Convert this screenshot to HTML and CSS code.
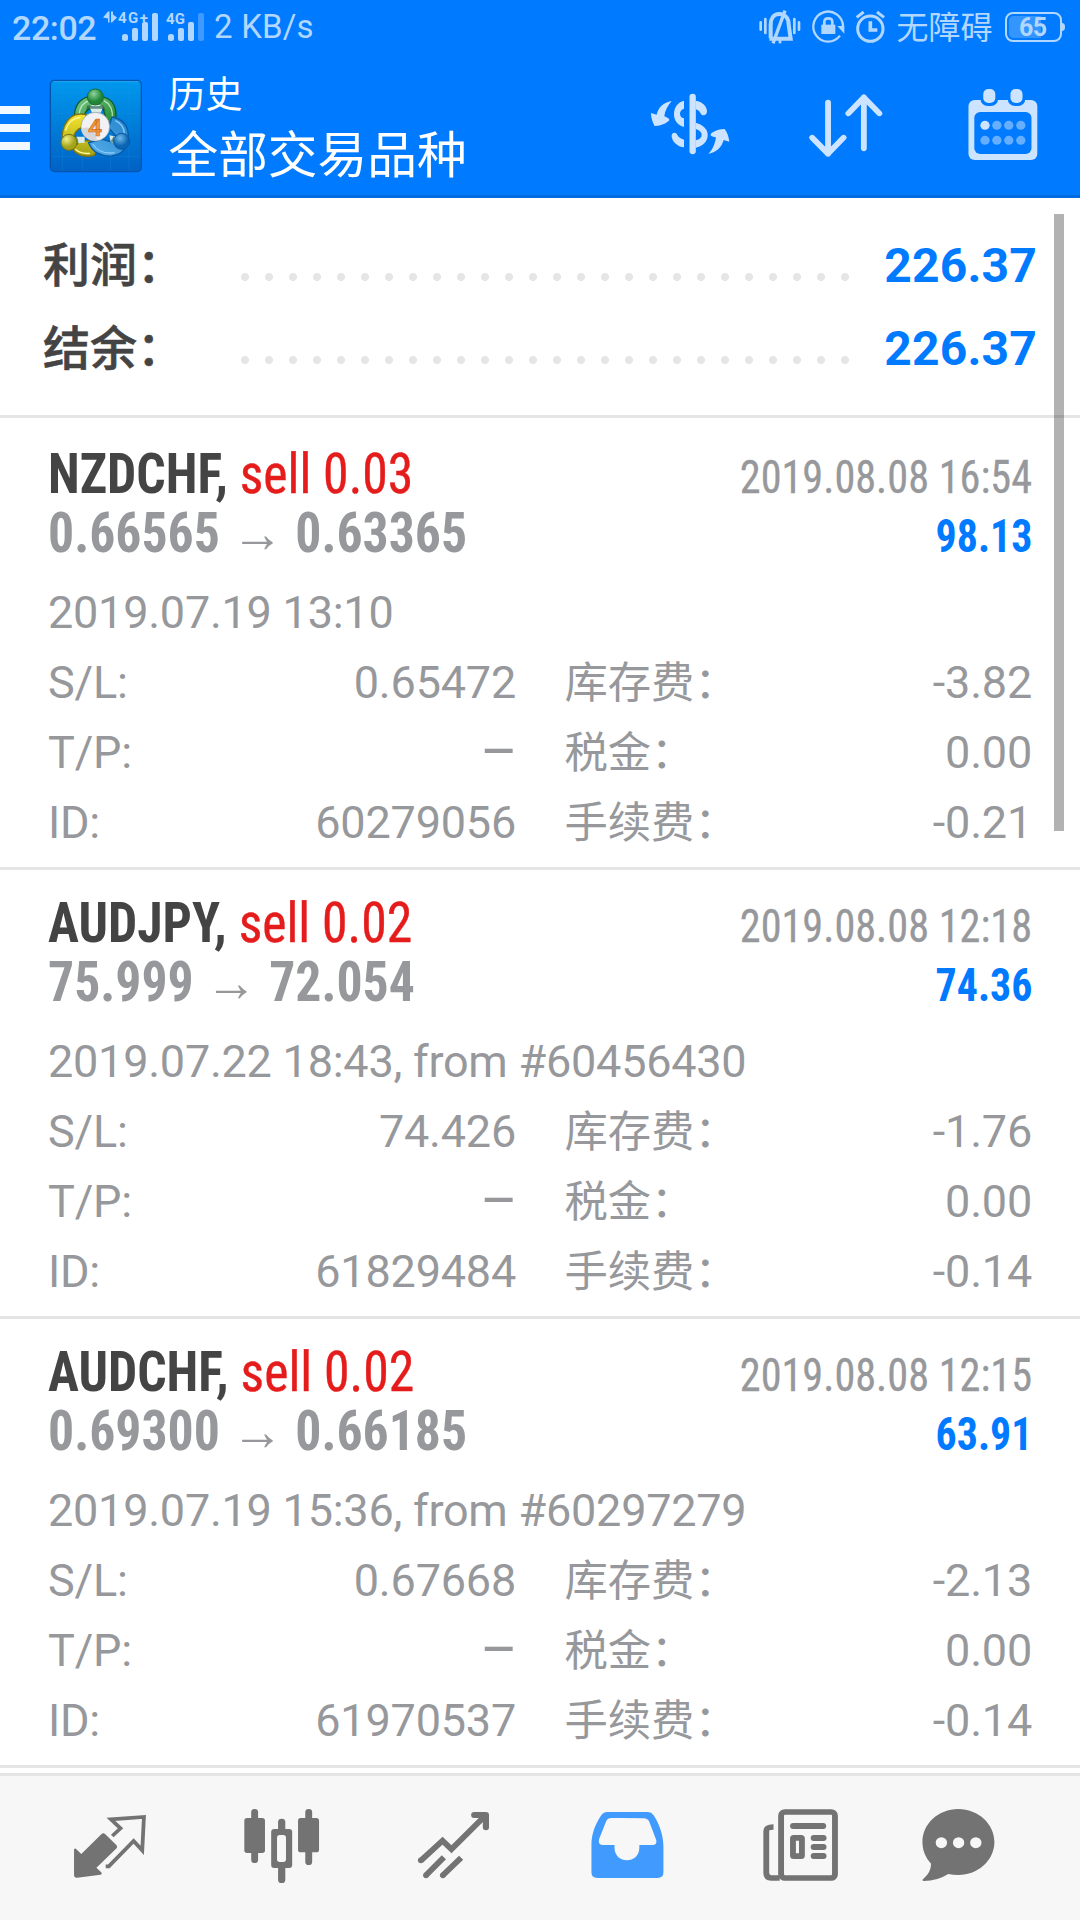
FILE: index.html
```html
<!DOCTYPE html>
<html lang="zh-CN">
<head>
<meta charset="utf-8">
<title>历史</title>
<link rel="stylesheet" href="styles.css">
</head>
<body>
<header class="header">
  <div class="status">
    <span class="clock">22:02</span>
    <svg class="signal" viewBox="100 0 107 56" fill="#b2d7ff">
      <path d="M103 17.500l5-6h1.500v11h-1.500v-4zM111 11.500h2v3l4 3-5 5h-1z"/>
      <text x="118" y="23" class="net" textLength="30">4G+</text>
      <rect x="122" y="34" width="6" height="7" rx="2.5"/><rect x="132" y="28" width="6" height="13" rx="2"/><rect x="142" y="22" width="6" height="19" rx="2"/><rect x="152" y="13" width="6" height="28" rx="2"/>
      <text x="166" y="24" class="net" textLength="19">4G</text>
      <rect x="168" y="34" width="6" height="7" rx="2.5"/><rect x="178" y="28" width="6" height="13" rx="2"/><rect x="188" y="22" width="6" height="19" rx="2"/><rect x="198" y="13" width="6" height="28" rx="2" opacity=".35"/>
    </svg>
    <span class="speed">2 KB/s</span>
    <svg class="sysicons" viewBox="20 0 390 168" fill="none" stroke="#b2d7ff">
      <g stroke-width="8" stroke-linecap="round"><path d="M31 67v22M45 57v42M132 57v42M146 67v22"/></g>
      <path d="M61 114V74c0-18 8-32 26-32s28 14 28 32l6 42H57" stroke-width="12"/>
      <path d="M68 130L104 32" stroke-width="10"/><path d="M89 114v16" stroke-width="8"/>
      <path d="M278 79A44.500 45 0 1 0 269 107" stroke-width="7"/>
      <path d="M261 78h21v23z" fill="#b2d7ff" stroke="none"/>
      <rect x="213" y="74" width="42" height="28" fill="#b2d7ff" stroke="none"/><path d="M222 75V66q0-11 12-11t12 11v9" stroke-width="8"/>
      <circle cx="360" cy="86" r="38" stroke-width="9"/><path d="M360 64v26h21" stroke-width="11"/><path d="M319 52l21-16M401 52l-21-16" stroke-width="9"/>
    </svg>
    <span class="mode">无障碍</span>
    <svg class="battery" viewBox="1003 0 64 56">
      <rect x="1006" y="13" width="55" height="28" rx="7" fill="none" stroke="#b2d7ff" stroke-width="2"/>
      <path d="M1014 16h27v22h-27q-5 0-5-5V21q0-5 5-5z" fill="#3595ff"/>
      <path d="M1062 23q3 0 3 4t-3 4z" fill="#b2d7ff"/>
      <text x="1019" y="36" class="level" textLength="28" fill="#b2d7ff">65</text>
    </svg>
  </div>
  <div class="appbar">
    <div class="menu"><i></i><i></i><i></i></div>
    <svg class="logo" viewBox="15 15 282 282">
      <defs>
        <linearGradient id="tile" x1="0" y1="0" x2="0" y2="1"><stop offset="0" stop-color="#0098ee"/><stop offset="1" stop-color="#0062c4"/></linearGradient>
        <linearGradient id="green" x1="0" y1="0" x2="1" y2="1"><stop offset="0" stop-color="#7fc98b"/><stop offset="1" stop-color="#178128"/></linearGradient>
        <linearGradient id="yellow" x1="0" y1="0" x2="0" y2="1"><stop offset="0" stop-color="#f5e52e"/><stop offset="1" stop-color="#a3a016"/></linearGradient>
        <linearGradient id="blue" x1="1" y1="0" x2="0" y2="1"><stop offset="0" stop-color="#2584cc"/><stop offset="1" stop-color="#55aeea"/></linearGradient>
        <radialGradient id="gh" cx=".4" cy=".3"><stop offset="0" stop-color="#8fd39b"/><stop offset="1" stop-color="#1f8737"/></radialGradient>
        <radialGradient id="yh" cx=".35" cy=".3"><stop offset="0" stop-color="#f2f08c"/><stop offset="1" stop-color="#a4a31a"/></radialGradient>
        <radialGradient id="bh" cx=".4" cy=".3"><stop offset="0" stop-color="#6dbbe9"/><stop offset="1" stop-color="#0c64b4"/></radialGradient>
      </defs>
      <rect x="19" y="19" width="273" height="274" rx="13" fill="url(#tile)" stroke="#0454ad" stroke-width="4"/>
      <path d="M28 23H283" stroke="#35adf3" stroke-width="2"/>
      <path d="M55 24v264M115 24v264M200 24v264M255 24v264M24 55h264M24 118h264M24 248h264" stroke="#24a0ec" stroke-width="2" opacity=".3"/>
      <path d="M140 68C112 70 92 90 91 128q6 18 28 10c0-16 4-24 14-32l42-4c8 14 12 28 12 60 18-4 29-20 29-38 0-34-18-54-48-56z" fill="url(#green)" stroke="#0b5a24" stroke-width="4"/>
      <path d="M140 78c-22 6-33 20-35 44M180 80c20 10 27 30 25 54" fill="none" stroke="#b4e6b5" stroke-width="4"/>
      <path d="M127 122c-36-8-68 10-73 66l34 4c2-14 10-26 26-32zM82 216c10 26 36 36 68 28l14-22-30-22-26 2z" fill="url(#yellow)" stroke="#7f7310" stroke-width="4"/>
      <path d="M109 130c-24 2-38 18-44 40M94 226c10 9 26 14 44 12" fill="none" stroke="#fff59a" stroke-width="4"/>
      <path d="M204 129c36 6 52 32 48 62l-34-2-24-28zM134 206c10 28 38 42 70 40 20-4 30-10 36-20l-24-18-40-12z" fill="url(#blue)" stroke="#075aa5" stroke-width="4"/>
      <path d="M214 140c18 8 26 20 27 38M146 210c14 22 38 30 66 26" fill="none" stroke="#8acbfa" stroke-width="4"/>
      <path d="M136 98l18-10 24 10-8 18h-26zM96 188l26 0v18l-26 2zM196 184l22 4-4 22-14-6z" fill="#d8ebe6"/>
      <path d="M130 94q26 6 48 0l8 18-14-8h-36l-10 8zM92 184q14 10 10 28l-10 2zM212 182q-4 16 2 28l-14-8z" fill="#134f3c" opacity=".6"/>
      <circle cx="154" cy="69" r="24" fill="url(#gh)" stroke="#176c31" stroke-width="3"/>
      <circle cx="75" cy="205" r="24" fill="url(#yh)" stroke="#767312" stroke-width="3"/>
      <circle cx="233" cy="202" r="24" fill="url(#bh)" stroke="#0757a5" stroke-width="3"/>
      <circle cx="154" cy="158" r="43" fill="#f2f2f5" stroke="#8d98a0" stroke-width="2"/>
      <path d="M112 164q35-16 48 36A42 42 0 0 1 112 164z" fill="#d5d6da"/>
      <text x="153" y="185" class="four">4</text>
    </svg>
    <div class="titles"><div class="screen">历史</div><div class="filter">全部交易品种</div></div>
    <svg class="act-deposit" viewBox="0 0 300 240" fill="none" stroke="#cce4ff">
      <path d="M158 39V201" stroke-width="19" stroke-linecap="round"/>
      <path d="M132 50C113 55 102 70 102 90s12 35 30 39v-26c-8-2-12-7-12-14s4-13 12-15zM167 50c20 3 34 16 34 32 0 12-14 17-20 5-3-6-8-9-14-11zM167 116c24 7 36 20 36 37 0 20-14 34-36 38v-22c12-3 18-8 18-16s-6-14-18-18zM132 190C112 187 98 175 95 158c-2-13 13-16 17-5 3 7 10 11 20 14z" fill="#cce4ff" stroke="none"/>
      <path d="M95 51C70 56 56 68 50 92l-17-5c0 15 5 29 11 39 15 0 28-4 41-14 6-5 4-8-12-15 2-18 9-30 22-46zM205 210c26-6 40-20 46-42l17 5c-2-15-6-27-14-38-13 0-25 3-38 11-8 6-5 11 12 14-3 18-8 34-23 50z" fill="#cce4ff" stroke="none"/>
    </svg>
    <svg class="act-sort" viewBox="770 252 240 240" preserveAspectRatio="none" fill="none" stroke="#cce4ff" stroke-width="17" stroke-linecap="round" stroke-linejoin="round">
      <path d="M837 308V461M791 413l46 48 45-48M941 445V292M896 340l45-48 45 48"/>
    </svg>
    <svg class="act-date" viewBox="1230 252 226 240" preserveAspectRatio="none">
      <rect x="1243" y="300" width="200" height="180" rx="18" fill="#cce4ff"/>
      <rect x="1260" y="336" width="166" height="126" rx="17" fill="#007aff"/>
      <rect x="1278" y="260" width="51" height="58" rx="21" fill="#007aff"/><rect x="1357" y="260" width="51" height="58" rx="21" fill="#007aff"/>
      <rect x="1286" y="267" width="35" height="42" rx="15" fill="#cce4ff"/><rect x="1365" y="267" width="35" height="42" rx="15" fill="#cce4ff"/>
      <g fill="#66afff"><circle cx="1291" cy="376" r="13.5" fill="#cce4ff"/><circle cx="1325.500" cy="376" r="13.5"/><circle cx="1360" cy="376" r="13.5"/><circle cx="1395" cy="376" r="13.5"/><circle cx="1291" cy="421" r="13.5"/><circle cx="1325.500" cy="421" r="13.5"/><circle cx="1360" cy="421" r="13.5"/><circle cx="1395" cy="421" r="13.5"/></g>
    </svg>
  </div>
</header>
<main class="list">
  <section class="summary">
    <div class="sum-row"><span class="sum-label">利润：</span><span class="dots"></span><b class="sum-value">226.37</b></div>
    <div class="sum-row"><span class="sum-label">结余：</span><span class="dots"></span><b class="sum-value">226.37</b></div>
  </section>
  <article class="deal">
    <div class="line"><div class="symbol"><b>NZDCHF,</b> <span>sell 0.03</span></div><time>2019.08.08 16:54</time></div>
    <div class="line"><div class="prices">0.66565 <i>→</i> 0.63365</div><div class="profit">98.13</div></div>
    <div class="opened">2019.07.19 13:10</div>
    <div class="details"><span>S/L:</span><span class="v">0.65472</span><span class="cn">库存费：</span><span class="v">-3.82</span><span>T/P:</span><span class="v none">–</span><span class="cn">税金：</span><span class="v">0.00</span><span>ID:</span><span class="v">60279056</span><span class="cn">手续费：</span><span class="v">-0.21</span></div>
  </article>
  <article class="deal">
    <div class="line"><div class="symbol"><b>AUDJPY,</b> <span>sell 0.02</span></div><time>2019.08.08 12:18</time></div>
    <div class="line"><div class="prices">75.999 <i>→</i> 72.054</div><div class="profit">74.36</div></div>
    <div class="opened">2019.07.22 18:43, from #60456430</div>
    <div class="details"><span>S/L:</span><span class="v">74.426</span><span class="cn">库存费：</span><span class="v">-1.76</span><span>T/P:</span><span class="v none">–</span><span class="cn">税金：</span><span class="v">0.00</span><span>ID:</span><span class="v">61829484</span><span class="cn">手续费：</span><span class="v">-0.14</span></div>
  </article>
  <article class="deal">
    <div class="line"><div class="symbol"><b>AUDCHF,</b> <span>sell 0.02</span></div><time>2019.08.08 12:15</time></div>
    <div class="line"><div class="prices">0.69300 <i>→</i> 0.66185</div><div class="profit">63.91</div></div>
    <div class="opened">2019.07.19 15:36, from #60297279</div>
    <div class="details"><span>S/L:</span><span class="v">0.67668</span><span class="cn">库存费：</span><span class="v">-2.13</span><span>T/P:</span><span class="v none">–</span><span class="cn">税金：</span><span class="v">0.00</span><span>ID:</span><span class="v">61970537</span><span class="cn">手续费：</span><span class="v">-0.14</span></div>
  </article>
  <div class="scrollbar"></div>
</main>
<nav class="tabs">
  <svg viewBox="69.7 78 500.9 432" preserveAspectRatio="none" fill="#737373">
    <path d="M215 297q3-3 6 0l15 15 59-60q5-5 10 0l32 32q6 6 0 12l-57 57 14 14q4 5-2 7l-68 9q-9 1-9-8z"/>
    <path d="M326 258l24-23-28-27 96-7-5 100-25-28-72 76h-9" fill="none" stroke="#737373" stroke-width="11"/>
  </svg>
  <svg viewBox="571.6 78 500.9 432" preserveAspectRatio="none" fill="#737373">
    <rect x="729" y="177" width="20" height="162" rx="10"/><rect x="709" y="204" width="60" height="105" rx="8"/>
    <rect x="886" y="177" width="20" height="168" rx="10"/><rect x="865" y="204" width="61" height="103" rx="8"/>
    <rect x="807" y="206" width="21" height="193" rx="10"/><rect x="787" y="237" width="61" height="117" rx="9"/><rect x="804" y="255" width="26" height="81" rx="8" fill="#f7f7f7"/>
  </svg>
  <svg viewBox="1071.5 78 500.9 432" preserveAspectRatio="none" fill="none" stroke="#737373" stroke-width="17">
    <path d="M1222 332l63-60 26 26 100-103" stroke-linejoin="miter"/><path d="M1377 195h34v37" stroke-width="18" stroke-linecap="round" stroke-linejoin="round"/>
    <path d="M1237 376l52-54M1286 376l53-53"/>
    <g fill="#737373" stroke="none"><circle cx="1222" cy="331" r="8.500"/><circle cx="1237" cy="376" r="8.500"/><circle cx="1286" cy="376" r="8.500"/></g>
  </svg>
  <svg viewBox="4.4 78 500.9 432" preserveAspectRatio="none" fill="#419bff">
    <path fill-rule="evenodd" d="M194 186H312q10 0 16 9c18 28 29 62 29 95v77q0 17-17 17H165q-17 0-17-17v-85c0-30 12-62 29-87q6-9 17-9zM206 204q-11 0-15 9l-21 55q-3 17 10 17h35v8c0 50 72 50 72 0v-8h37q16 0 12-15l-19-52q-4-12-16-13-48-2-95-1z"/>
  </svg>
  <svg viewBox="505.2 78 500.9 432" preserveAspectRatio="none" fill="none" stroke="#737373" stroke-width="17">
    <rect x="700" y="186" width="156.500" height="198" rx="11"/><path d="M678 231q-21 0-21 12v126q0 15 15 15h24"/>
    <path d="M735 228h87" stroke-width="18" stroke-linecap="round"/><rect x="734.500" y="263.500" width="26" height="55" rx="2"/>
    <path d="M795 264h28M795 291h28M795 318h28" stroke-width="18" stroke-linecap="round"/>
  </svg>
  <svg viewBox="1006.1 78 500.9 432" preserveAspectRatio="none" fill="#737373">
    <path d="M1213 177c58 0 105 45 105 99s-47 99-105 99q-15 0-29-3-32 21-71 21-7-2-1-7 22-19 22-45c-16-18-25-40-25-65 0-54 46-99 104-99z"/>
    <g fill="#f7f7f7"><circle cx="1164" cy="278" r="16.500"/><circle cx="1214" cy="278" r="16.500"/><circle cx="1264" cy="278" r="16.500"/></g>
  </svg>
</nav>
</body>
</html>
```
FILE: styles.css
```css
* { box-sizing: border-box; }
body {
  margin: 0; width: 1080px; height: 1920px; overflow: hidden;
  display: flex; flex-direction: column;
  background: #fff; color: #97989b;
  font-family: Roboto, "Noto Sans CJK SC", sans-serif;
}
svg { display: block; flex: none; }
i { font-style: normal; }
.header { flex: none; height: 198px; background: #007aff; border-bottom: 3px solid #006be0; color: #fff; }
.status { height: 56px; display: flex; color: #b2d7ff; line-height: 56px; white-space: nowrap; }
.clock { width: 100px; padding-left: 12px; font-size: 34px; font-weight: 500; letter-spacing: -.4px; }
.signal { width: 107px; height: 56px; }
.net { font-size: 15px; font-weight: 700; }
.speed { margin-left: 7px; font-size: 33px; line-height: 54px; letter-spacing: .2px; }
.sysicons { width: 130px; height: 56px; margin-left: auto; }
.mode { margin-left: 9.500px; width: 105px; font-size: 32px; line-height: 56px; }
.battery { width: 64px; height: 56px; margin: 0 13px 0 1.500px; }
.level { font-size: 25px; font-weight: 700; }
.appbar { height: 139px; display: flex; }
.menu { width: 30px; padding-top: 50px; display: flex; flex-direction: column; gap: 10px; }
.menu i { height: 8px; background: #f2f8ff; }
.logo { width: 94px; height: 94px; margin: 23px 0 0 19px; }
.four { font: 700 74px Roboto, sans-serif; text-anchor: middle; fill: #f09a45; stroke: #d56a18; stroke-width: 2px; }
.titles { margin-left: 25.500px; flex: 1; white-space: nowrap; }
.screen { margin-top: 15px; height: 50px; font-size: 37px; line-height: 50px; }
.filter { height: 66px; font-size: 49.700px; line-height: 66px; margin-top: 2px; }
.act-deposit { width: 100px; height: 80px; margin-top: 28px; }
.act-sort { width: 82.600px; height: 80px; margin: 28px 0 0 65.200px; }
.act-date { width: 77.800px; height: 80px; margin: 28px 38.600px 0 75.800px; }

.list { position: relative; height: 1575px; flex: none; }
.summary { height: 220px; padding: 26px 43px 0 43px; border-bottom: 3px solid #e5e5e5; margin-bottom: 3px; }
.sum-row { height: 83px; line-height: 83px; display: flex; }
.sum-label { width: 190px; font-size: 47px; font-weight: 500; color: #444; -webkit-text-stroke: .6px #444; }
.dots { width: 624px; background: radial-gradient(circle at 12px 53px, #e5e5e5 3.600px, transparent 4.400px) 0 0 / 24px 83px; }
.sum-value { flex: 1; text-align: right; font-size: 48px; letter-spacing: .2px; color: #007aff; }

.deal { height: 449px; padding: 24px 48px 0; border-bottom: 3px solid #e5e5e5; }
.line { height: 59px; line-height: 59px; display: flex; justify-content: space-between; align-items: baseline; font-family: "Roboto Condensed", Roboto, sans-serif; }
.symbol, .prices { font-size: 55px; white-space: pre; transform: scaleX(.94); transform-origin: left; }
.symbol b { color: #444; }
.symbol span { color: #e51c1c; -webkit-text-stroke: .4px #e51c1c; }
.prices { font-weight: 700; }
.line time { font-size: 46px; transform: scaleX(.919); transform-origin: right; -webkit-text-stroke: .3px #97989b; }
.profit { font-size: 46px; font-weight: 700; color: #007aff; transform: scaleX(.91); transform-origin: right; }
.opened { margin-top: 15px; height: 70px; font-size: 45px; line-height: 70px; letter-spacing: -.240px; }
.details { display: grid; grid-template-columns: 150px 318px 232px 1fr; grid-auto-rows: 70px; line-height: 70px; font-size: 45px; letter-spacing: -.200px; }
.v { text-align: right; }
.none { font-size: 57px; line-height: 68px; margin-right: -1.500px; }
.cn { padding-left: 48.500px; font-size: 43.300px; line-height: 72px; white-space: nowrap; letter-spacing: 0; }
.scrollbar { position: absolute; left: 1054px; top: 16px; width: 10px; height: 617px; background: rgba(0, 0, 0, .3); }

.tabs { flex: none; height: 147px; border-top: 3px solid #e5e5e5; background: #f7f7f7; padding-left: 24px; display: flex; }
.tabs svg { width: 172.500px; height: 144px; }
```
